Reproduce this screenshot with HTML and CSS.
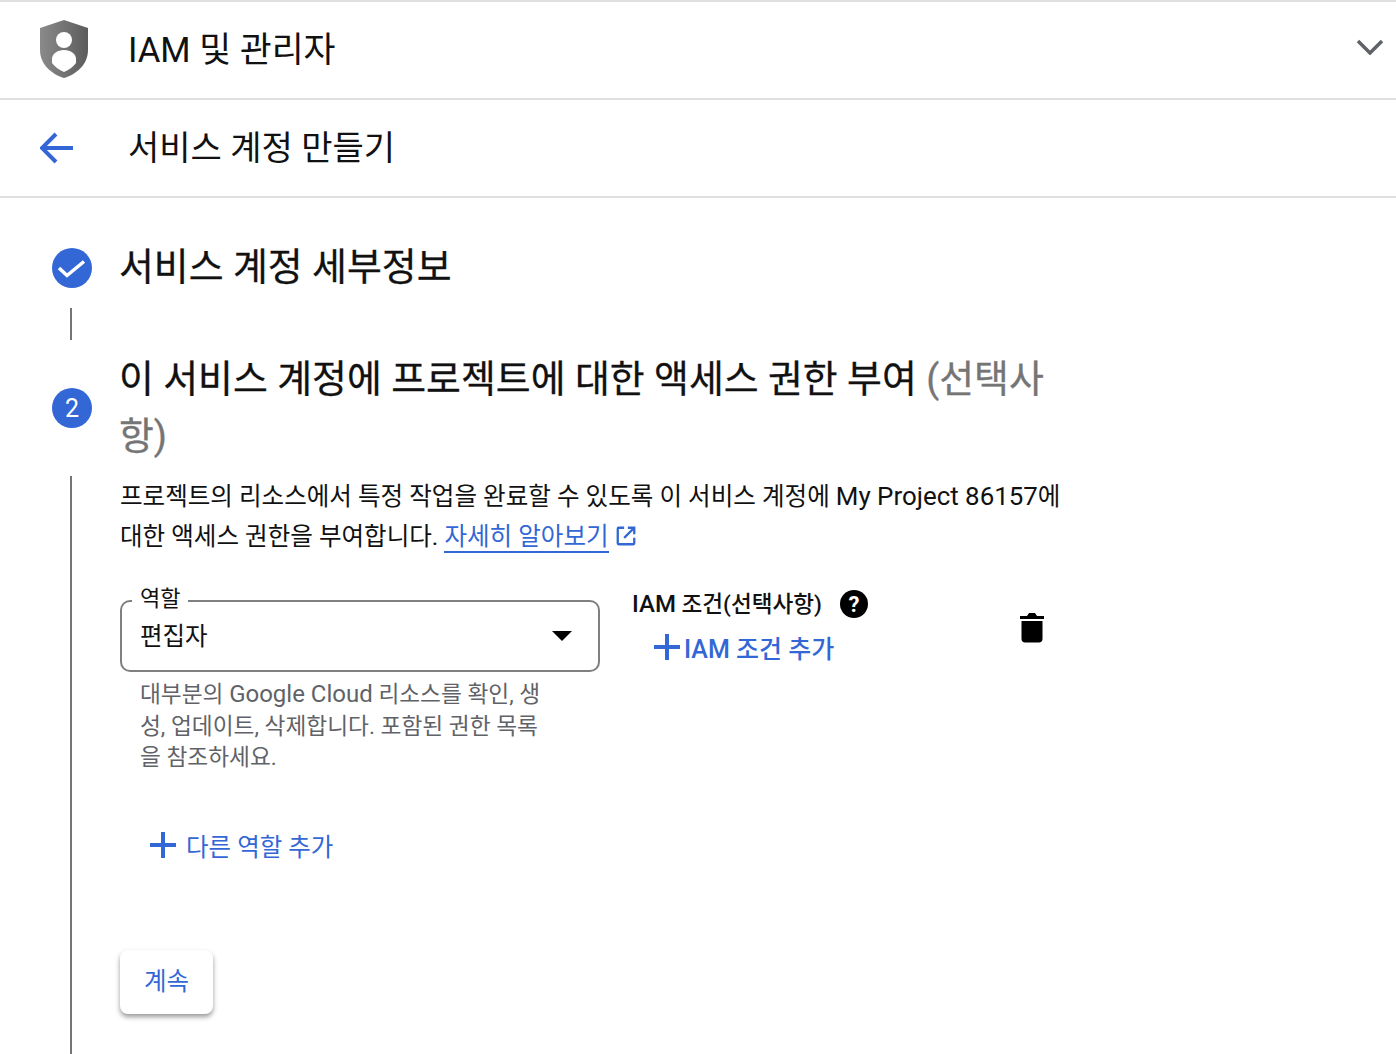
FILE: index.html
```html
<!DOCTYPE html>
<html lang="ko">
<head>
  <meta charset="UTF-8">
  <meta name="viewport" content="width=device-width, initial-scale=1.0">
  <title>서비스 계정 만들기</title>
  <link rel="stylesheet" href="styles.css">
</head>
<body>
  <header class="bar product-bar">
    <svg class="shield" viewBox="0 0 48 58">
      <defs>
        <linearGradient id="shieldFill" x1="0" x2="1" y1="0" y2="0">
          <stop offset="0" stop-color="#8a8a8a"/>
          <stop offset="1" stop-color="#5c5c5c"/>
        </linearGradient>
      </defs>
      <path fill="url(#shieldFill)" d="M24 0 48 8V30C48 44 37 54 24 58 11 54 0 44 0 30V8Z"/>
      <circle cx="24" cy="20" r="8" fill="#fff"/>
      <path fill="#fff" d="M24 30C31 30 36 34 36 39V43C33 47 29 50 24 52 19 50 15 47 12 43V39C12 34 17 30 24 30Z"/>
    </svg>
    <span class="bar-title">IAM 및 관리자</span>
    <svg class="chevron" viewBox="0 0 28 16"><path d="M2 2 14 14 26 2"/></svg>
  </header>

  <div class="bar page-bar">
    <svg class="back" viewBox="0 0 33 32"><path d="M33 16H3M16 2 2 16 16 30"/></svg>
    <span class="bar-title">서비스 계정 만들기</span>
  </div>

  <main class="steps">
    <section class="step-head done">
      <span class="badge">
        <svg viewBox="0 0 40 40"><path d="M7 20 15 27.500 32 13.500"/></svg>
      </span>
      <h2>서비스 계정 세부정보</h2>
    </section>
    <div class="connector"></div>

    <section class="step-head active">
      <span class="badge">2</span>
      <h2>이 서비스 계정에 프로젝트에 대한 액세스 권한 부여 <span class="optional">(선택사<br>항)</span></h2>
    </section>

    <div class="step-body">
      <p class="intro">프로젝트의 리소스에서 특정 작업을 완료할 수 있도록 이 서비스 계정에 <span class="latin">My Project 86157</span>에<br>대한 액세스 권한을 부여합니다. <a class="learn" href="#">자세히 알아보기</a>
        <svg class="external" viewBox="0 0 24 24"><path d="M10 3H4Q3 3 3 4V20Q3 21 4 21H20Q21 21 21 20V14M14 3H21V10M21 3 10 14"/></svg>
      </p>

      <div class="role-row">
        <div class="role-col">
          <div class="select">
            <span class="select-label">역할</span>
            <span class="select-value">편집자</span>
            <span class="select-arrow"></span>
          </div>
          <p class="hint">대부분의 <span class="hint-latin">Google Cloud</span> 리소스를 확인, 생<br>성, 업데이트, 삭제합니다. 포함된 권한 목록<br>을 참조하세요.</p>
        </div>
        <div class="condition-col">
          <div class="condition-label">
            <span class="condition-text"><span class="hint-latin">IAM</span> 조건(선택사항)</span>
            <span class="help">?</span>
          </div>
          <a class="add-link condition-add" href="#">
            <svg class="plus" viewBox="0 0 26 26"><path d="M13 0V26M0 13H26"/></svg>
            IAM 조건 추가
          </a>
        </div>
        <svg class="trash" viewBox="0 0 24 30">
          <path d="M0 3H7L9 0H15L17 3H24V6H0Z"/>
          <path d="M1.500 8H22.500V26C22.500 28 21 29.500 19 29.500H5C3 29.500 1.500 28 1.500 26Z"/>
        </svg>
      </div>

      <a class="add-link role-add" href="#">
        <svg class="plus" viewBox="0 0 26 26"><path d="M13 0V26M0 13H26"/></svg>
        다른 역할 추가
      </a>

      <button class="continue">계속</button>
    </div>
  </main>
</body>
</html>
```

FILE: styles.css
```css
html, body {
  height: 1054px;
  overflow: hidden;
}

body {
  margin: 0;
  background: #fff;
  color: #111;
  font-family: Roboto, "Noto Sans CJK KR", sans-serif;
  border-top: 2px solid #e0e0e0;
  box-sizing: border-box;
}

.bar {
  display: flex;
  align-items: center;
  height: 96px;
  border-bottom: 2px solid #e0e0e0;
}

.bar-title {
  margin-bottom: 6px;
  font-size: 34px;
  color: #111;
}

.product-bar .bar-title {
  font-size: 34.700px;
}

.shield {
  width: 48px;
  height: 58px;
  margin: 0 40px 2px 40px;
}

.chevron {
  width: 28px;
  height: 16px;
  margin: 0 12px 6px auto;
  fill: none;
  stroke: #5f6368;
  stroke-width: 3.500;
}

.back {
  width: 33px;
  height: 32px;
  margin-left: 40px;
  margin-right: 55px;
  fill: none;
  stroke: #3367d6;
  stroke-width: 4;
}

.step-head {
  display: flex;
  align-items: flex-start;
}

.step-head h2 {
  margin: 0 0 0 -1px;
  width: 960px;
  font-size: 37.900px;
  font-weight: 400;
  line-height: 57px;
  -webkit-text-stroke: 0.3px currentColor;
}

.optional {
  color: #757575;
}

.badge {
  display: flex;
  align-items: center;
  justify-content: center;
  flex: none;
  width: 40px;
  height: 40px;
  margin-left: 52px;
  margin-right: 28px;
  border-radius: 50%;
  background: #3367d6;
  color: #fff;
  font-size: 25px;
}

.badge svg {
  width: 40px;
  height: 40px;
  fill: none;
  stroke: #fff;
  stroke-width: 3.500;
}

.step-head.done {
  padding-top: 41px;
}

.step-head.done .badge {
  margin-top: 9px;
}

.connector {
  width: 2px;
  height: 32px;
  margin: 12px 0 0 70px;
  background: #757575;
}

.step-head.active {
  margin-top: 11px;
}

.step-head.active .badge {
  margin-top: 37px;
}

.step-body {
  margin: 11px 0 0 70px;
  padding: 0 0 80px 48px;
  border-left: 2px solid #757575;
}

.intro {
  margin: 0;
  font-size: 24.550px;
  line-height: 40px;
}

.latin {
  font-size: 25.900px;
}

.learn {
  color: #3367d6;
  text-decoration: none;
  border-bottom: 2px solid #3367d6;
}

.external {
  width: 22px;
  height: 22px;
  vertical-align: -2px;
  fill: none;
  stroke: #3367d6;
  stroke-width: 2.500;
}

.role-row {
  display: flex;
  align-items: flex-start;
  margin-top: 43px;
}

.role-col {
  flex: none;
  width: 480px;
}

.select {
  position: relative;
  display: flex;
  align-items: center;
  justify-content: space-between;
  box-sizing: border-box;
  height: 72px;
  padding: 0 26px 0 18px;
  border: 2px solid #808080;
  border-radius: 10px;
}

.select-label {
  position: absolute;
  top: -18px;
  left: 10px;
  padding: 0 8px;
  background: #fff;
  font-size: 22px;
  line-height: 30px;
}

.select-value {
  margin-bottom: 4px;
  font-size: 24.500px;
}

.select-arrow {
  width: 0;
  height: 0;
  border-left: 10px solid transparent;
  border-right: 10px solid transparent;
  border-top: 10px solid #000;
}

.hint {
  margin: 7px 0 0 20px;
  color: #5f6368;
  font-size: 22.700px;
  line-height: 31.500px;
}

.hint-latin {
  font-size: 24px;
}

.condition-col {
  flex: none;
  width: 388px;
  margin-left: 32px;
}

.condition-label {
  display: flex;
  align-items: center;
  gap: 18px;
  height: 32px;
  margin-top: -12px;
  font-size: 22.600px;
  font-weight: 500;
}

.condition-text {
  padding-bottom: 4px;
}

.help {
  display: flex;
  align-items: center;
  justify-content: center;
  width: 28px;
  height: 28px;
  border-radius: 50%;
  background: #000;
  color: #fff;
  font-size: 22px;
  font-weight: 700;
}

.add-link {
  display: flex;
  align-items: center;
  color: #3367d6;
  font-size: 25px;
  font-weight: 500;
  text-decoration: none;
}

.condition-add {
  gap: 4px;
  margin: 9px 0 0 22px;
}

.role-add {
  gap: 10px;
  margin: 54px 0 0 30px;
  font-size: 24.500px;
  font-weight: 400;
}

.plus {
  width: 26px;
  height: 26px;
  fill: none;
  stroke: #3367d6;
  stroke-width: 4;
}

.trash {
  flex: none;
  width: 24px;
  height: 30px;
  margin-top: 13px;
  fill: #000;
}

.continue {
  display: block;
  width: 93px;
  height: 64px;
  margin-top: 87px;
  padding: 0 0 4px;
  border: none;
  border-radius: 8px;
  background: #fff;
  color: #3367d6;
  font-family: inherit;
  font-size: 24.500px;
  box-shadow: 0 3px 5px rgba(0, 0, 0, 0.4);
}
```
